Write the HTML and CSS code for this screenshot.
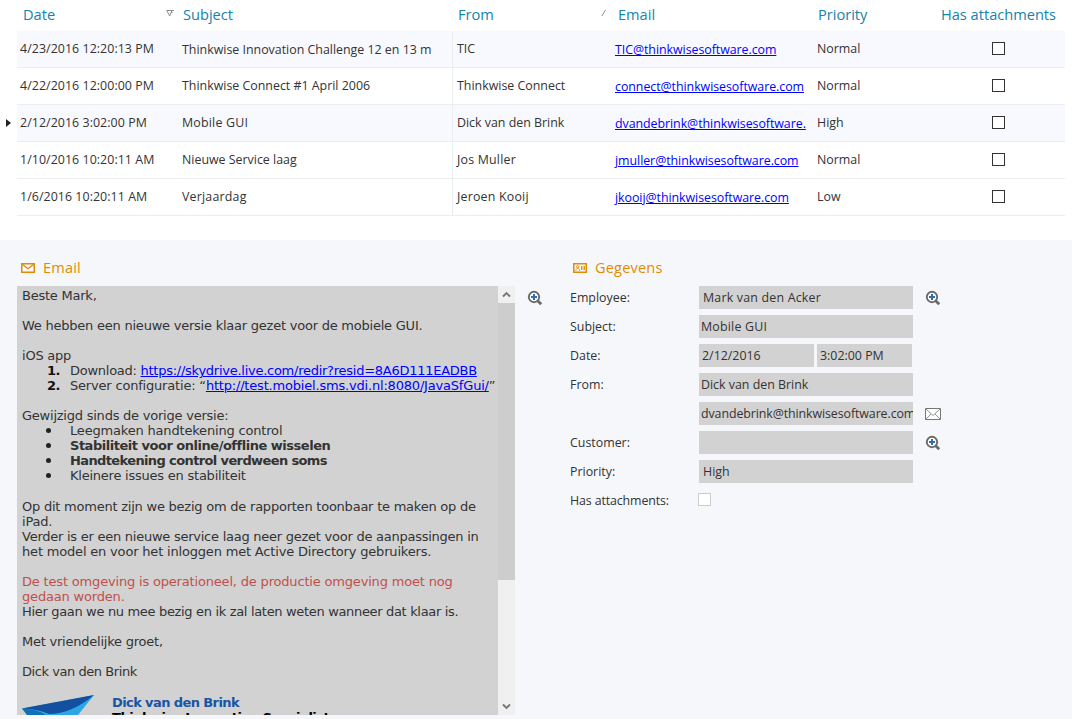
FILE: index.html
```html
<!DOCTYPE html>
<html lang="nl">
<head>
<meta charset="utf-8">
<title>Email</title>
<link rel="stylesheet" href="styles.css">
</head>
<body>
<svg class="defs" width="0" height="0">
  <symbol id="zoom" viewBox="0 0 16 16">
    <path d="M10.4 10.4 14.2 14.2" stroke="#6a6a6a" stroke-width="2.8"/>
    <circle cx="7" cy="7" r="5.2" fill="#fff" stroke="#6a6a6a" stroke-width="1.900"/>
    <path d="M7 4v6M4 7h6" stroke="#2f6db5" stroke-width="2"/>
  </symbol>
</svg>
<main class="app">
  <section class="grid">
    <div class="row head">
      <span class="cell">Date<svg class="sort" width="9" height="9" viewBox="0 0 9 9"><path d="M.5 1.5h7.500M1 2l2.700 5M3.700 7l2-5M5 3.500h1.500" fill="none" stroke="#8c8c8c"/></svg></span>
      <span class="cell">Subject</span>
      <span class="cell">From<svg class="sort from-sort" width="6" height="8" viewBox="0 0 6 8"><path d="M.8 7 4.500 1" fill="none" stroke="#8c8c8c"/></svg></span>
      <span class="cell">Email</span>
      <span class="cell">Priority</span>
      <span class="cell mid">Has attachments</span>
    </div>
    <div class="row alt">
      <span class="cell date">4/23/2016 12:20:13 PM</span><span class="cell subj low">Thinkwise Innovation Challenge 12 en 13 m</span><span class="cell from">TIC</span><span class="cell mail"><a>TIC@thinkwisesoftware.com</a></span><span class="cell prio">Normal</span><span class="cell mid"><i class="check"></i></span>
    </div>
    <div class="row">
      <span class="cell date">4/22/2016 12:00:00 PM</span><span class="cell subj">Thinkwise Connect #1 April 2006</span><span class="cell from">Thinkwise Connect</span><span class="cell mail"><a>connect@thinkwisesoftware.com</a></span><span class="cell prio">Normal</span><span class="cell mid"><i class="check"></i></span>
    </div>
    <div class="row alt current">
      <span class="cell date">2/12/2016 3:02:00 PM</span><span class="cell subj wide">Mobile GUI</span><span class="cell from">Dick van den Brink</span><span class="cell mail"><a>dvandebrink@thinkwisesoftware.</a></span><span class="cell prio">High</span><span class="cell mid"><i class="check"></i></span>
    </div>
    <div class="row">
      <span class="cell date">1/10/2016 10:20:11 AM</span><span class="cell subj">Nieuwe Service laag</span><span class="cell from wide">Jos Muller</span><span class="cell mail"><a>jmuller@thinkwisesoftware.com</a></span><span class="cell prio">Normal</span><span class="cell mid"><i class="check"></i></span>
    </div>
    <div class="row">
      <span class="cell date">1/6/2016 10:20:11 AM</span><span class="cell subj wide">Verjaardag</span><span class="cell from wide">Jeroen Kooij</span><span class="cell mail"><a>jkooij@thinkwisesoftware.com</a></span><span class="cell prio">Low</span><span class="cell mid"><i class="check"></i></span>
    </div>
  </section>

  <section class="detail">
    <div class="email">
      <h2><svg width="14" height="10" viewBox="0 0 14 10"><path d="M.75.75h12.500v8.500H.75z" fill="none" stroke="#e18c00" stroke-width="1.500"/><path d="M1.500 1.500 7 5.700 12.500 1.500" fill="none" stroke="#e18c00" stroke-width="1.300"/></svg><span>Email</span></h2>
      <div class="memo-line">
        <div class="memo">
          <div class="text">
            <p>Beste Mark,</p>
            <p>We hebben een nieuwe versie klaar gezet voor de mobiele GUI.</p>
            <div>iOS app</div>
            <ul class="list numbers">
              <li><b class="mark">1.</b><span class="download">Download: <a>https://skydrive.live.com/redir?resid=8A6D111EADBB</a></span></li>
              <li><b class="mark">2.</b><span class="server">Server configuratie: “<a>http://test.mobiel.sms.vdi.nl:8080/JavaSfGui/</a>”</span></li>
            </ul>
            <div>Gewijzigd sinds de vorige versie:</div>
            <ul class="list bullets">
              <li><i class="dot"></i><span class="loose">Leegmaken handtekening control</span></li>
              <li><i class="dot"></i><b>Stabiliteit voor online/offline wisselen</b></li>
              <li><i class="dot"></i><b class="tight">Handtekening control verdween soms</b></li>
              <li><i class="dot"></i><span>Kleinere issues en stabiliteit</span></li>
            </ul>
            <p>Op dit moment zijn we bezig om de rapporten toonbaar te maken op de<br>iPad.<br><span class="service">Verder is er een nieuwe service laag neer gezet voor de aanpassingen in</span><br><span class="loose">het model en voor het inloggen met Active Directory gebruikers.</span></p>
            <div class="red loose">De test omgeving is operationeel, de productie omgeving moet nog<br>gedaan worden.</div>
            <p class="narrow">Hier gaan we nu mee bezig en ik zal laten weten wanneer dat klaar is.</p>
            <p>Met vriendelijke groet,</p>
            <p class="dick">Dick van den Brink</p>
            <div class="signature">
              <svg width="73" height="30" viewBox="0 0 73 30"><path d="M0 13.500 72 0 48 30 8 22z" fill="#2aa7e4"/><path d="M0 13.500C12 14 22 17 28 24H8z" fill="#0e70b8"/><path d="M0 13.500 72 0C58 12 42 19 27 19 18 15 10 14 0 13.500z" fill="#13509f"/></svg>
              <div><b class="name">Dick van den Brink</b><br><b class="role">Thinkwise Innovation Specialist</b></div>
            </div>
          </div>
          <div class="scroll">
            <span class="arrow"><svg width="9" height="7" viewBox="0 0 9 7"><path d="M1 5.500 4.500 2 8 5.500" fill="none" stroke="#777" stroke-width="1.900"/></svg></span>
            <span class="thumb"></span>
            <span class="arrow end"><svg width="9" height="7" viewBox="0 0 9 7"><path d="M1 1.500 4.500 5 8 1.500" fill="none" stroke="#777" stroke-width="1.900"/></svg></span>
          </div>
        </div>
        <svg class="tool" width="16" height="16"><use href="#zoom"/></svg>
      </div>
    </div>

    <div class="form">
      <h2><svg width="14" height="10" viewBox="0 0 14 10"><path d="M.75.75h12.500v8.500H.75z" fill="none" stroke="#e18c00" stroke-width="1.500"/><path d="M3 8V6.500L4 5.500H5.500L6.500 6.500V8M8.500 3v4M10 3v4M11.500 3v4" fill="none" stroke="#e18c00" stroke-width=".9"/><circle cx="4.700" cy="3.800" r="1.200" fill="none" stroke="#e18c00" stroke-width=".9"/></svg><span>Gegevens</span></h2>
      <div class="field"><label>Employee:</label><span class="box pad wide">Mark van den Acker</span><svg class="tool" width="16" height="16"><use href="#zoom"/></svg></div>
      <div class="field"><label>Subject:</label><span class="box wide">Mobile GUI</span></div>
      <div class="field"><label>Date:</label><span class="box day">2/12/2016</span><span class="box time">3:02:00 PM</span></div>
      <div class="field"><label>From:</label><span class="box">Dick van den Brink</span></div>
      <div class="field"><label></label><span class="box address">dvandebrink@thinkwisesoftware.com</span><svg class="tool env" width="16" height="12" viewBox="0 0 16 12"><path d="M.5.5h15v11H.5z" fill="#fff" stroke="#777"/><path d="M1 1 8 7.500 15 1M1 11l5-5M15 11l-5-5" fill="none" stroke="#858585" stroke-width=".9"/></svg></div>
      <div class="field"><label>Customer:</label><span class="box"></span><svg class="tool" width="16" height="16"><use href="#zoom"/></svg></div>
      <div class="field"><label>Priority:</label><span class="box pad">High</span></div>
      <div class="field"><label class="last">Has attachments:</label><i class="check pale"></i></div>
    </div>
  </section>
</main>
</body>
</html>
```
FILE: styles.css
```css
* { box-sizing: border-box; }
body { margin: 0; background: #fff; color: #333; font: 12.4px/18px "Open Sans", "Noto Sans", sans-serif; overflow: hidden; }
.defs { position: absolute; }
.app { width: 1072px; height: 719px; display: flex; flex-direction: column; overflow: hidden; }
a { color: #00f; text-decoration: underline; }

.grid { height: 240px; flex: none; padding: 0 7px 0 17px; }
.row { position: relative; display: grid; grid-template-columns: 162px 274px 159px 201px 119px 133px; height: 37px; border-bottom: 1px solid #ebeeef; }
.row.head { height: 31px; border: 0; color: #1583ab; font-size: 14.6px; }
.row.alt { background: #f8f9fe; }
.cell { display: flex; align-items: center; padding: 0 0 0 3px; white-space: nowrap; overflow: hidden; }
.head .cell { padding: 0 0 4px 6px; position: relative; overflow: visible; }
.head .cell:nth-child(2) { padding-left: 4px; }
.head .cell:nth-child(3) { padding-left: 5px; }
.head .cell:nth-child(4) { padding-left: 6px; }
.head .cell:nth-child(5) { padding-left: 5px; }
.head .cell.mid { padding-left: 0; }
.cell.date { letter-spacing: .06px; }
.cell.from { border-left: 1px solid #ebeeef; margin-left: -1px; padding-left: 4px; }
.cell.wide, .wide { letter-spacing: .2px; }
.cell.low { padding-top: 2px; }
.cell.mail { padding: 2px 0 0 3px; letter-spacing: -.05px; }
.cell.prio { padding-left: 4px; }
.cell.mid { justify-content: center; padding: 0 0 2px; }
.row.head .cell.mid { padding-bottom: 4px; }
.sort { margin-left: auto; margin-right: 4px; margin-bottom: 1px; }
.from-sort { margin-right: 5px; }
.check { display: block; width: 13px; height: 13px; border: 1px solid #333; background: #fff; }
.check.pale { border-color: #ccc; margin: -2px 0 0 -1px; }
.current::before { content: ""; position: absolute; left: -11px; top: 14px; border-left: 5px solid #222; border-top: 4.5px solid transparent; border-bottom: 4.5px solid transparent; }

.detail { flex: 1; min-height: 0; display: flex; background: #f5f7fb; padding: 17px 0 0 17px; }
.email { width: 553px; }
h2 { display: flex; align-items: center; gap: 8px; margin: 0; height: 29px; padding: 0 0 7px 4px; font-size: 14.6px; font-weight: 400; color: #e18c00; letter-spacing: .15px; }
h2 span { padding-bottom: 2px; }
.memo-line { display: flex; gap: 12px; }
.memo { display: flex; width: 498px; height: 429px; background: #d2d2d2; overflow: hidden; }
.text { width: 481px; padding: 2px 0 0 5px; font: 13px/15px "DejaVu Sans", Verdana, sans-serif; letter-spacing: -.23px; white-space: nowrap; overflow: hidden; }
.text p { margin: 0 0 15px; }
.text b { letter-spacing: -.48px; }
.text .tight { letter-spacing: -.62px; }
.text .loose { letter-spacing: -.18px; }
.text .narrow { letter-spacing: -.33px; }
.text .download { letter-spacing: -.26px; }
.text .server { letter-spacing: -.19px; }
.text .service { letter-spacing: -.25px; }
.text .dick { letter-spacing: -.44px; }
.list { list-style: none; margin: 0; padding: 0 0 0 25px; }
.list li { display: flex; }
.numbers { margin-bottom: 15px; }
.bullets { margin-bottom: 16px; }
.mark { flex: none; width: 23px; color: #111; }
.dot { width: 5px; height: 5px; border-radius: 50%; background: #222; margin: 5px 19px 0 -1px; }
.red { color: #c0504d; }
.signature { display: flex; gap: 17px; padding-top: 1px; }
.signature div { line-height: 15px; }
.signature .name { color: #1755a5; letter-spacing: -.6px; }
.signature .role { color: #000; }
.scroll { width: 17px; display: flex; flex-direction: column; background: #f0f0f0; }
.arrow { height: 17px; display: flex; align-items: center; justify-content: center; }
.arrow.end { margin-top: auto; }
.thumb { height: 277px; background: #cdcdcd; }
.tool { margin-top: 4px; flex: none; }

.form { width: 400px; }
.form h2 { padding-left: 3px; }
.field { display: flex; align-items: center; height: 23px; margin-bottom: 6px; }
.field label { width: 129px; }
.field label.last { letter-spacing: -.12px; }
.field .tool { margin: 1px 0 0 12px; }
.box { width: 214px; height: 23px; background: #d2d2d2; padding: 3px 0 0 2px; white-space: nowrap; overflow: hidden; }
.box.pad { padding-left: 4px; }
.box.day { width: 115px; padding-left: 3px; }
.box.time { width: 95px; margin-left: 3px; padding-left: 3px; }
.box.address { letter-spacing: -.09px; }
```
